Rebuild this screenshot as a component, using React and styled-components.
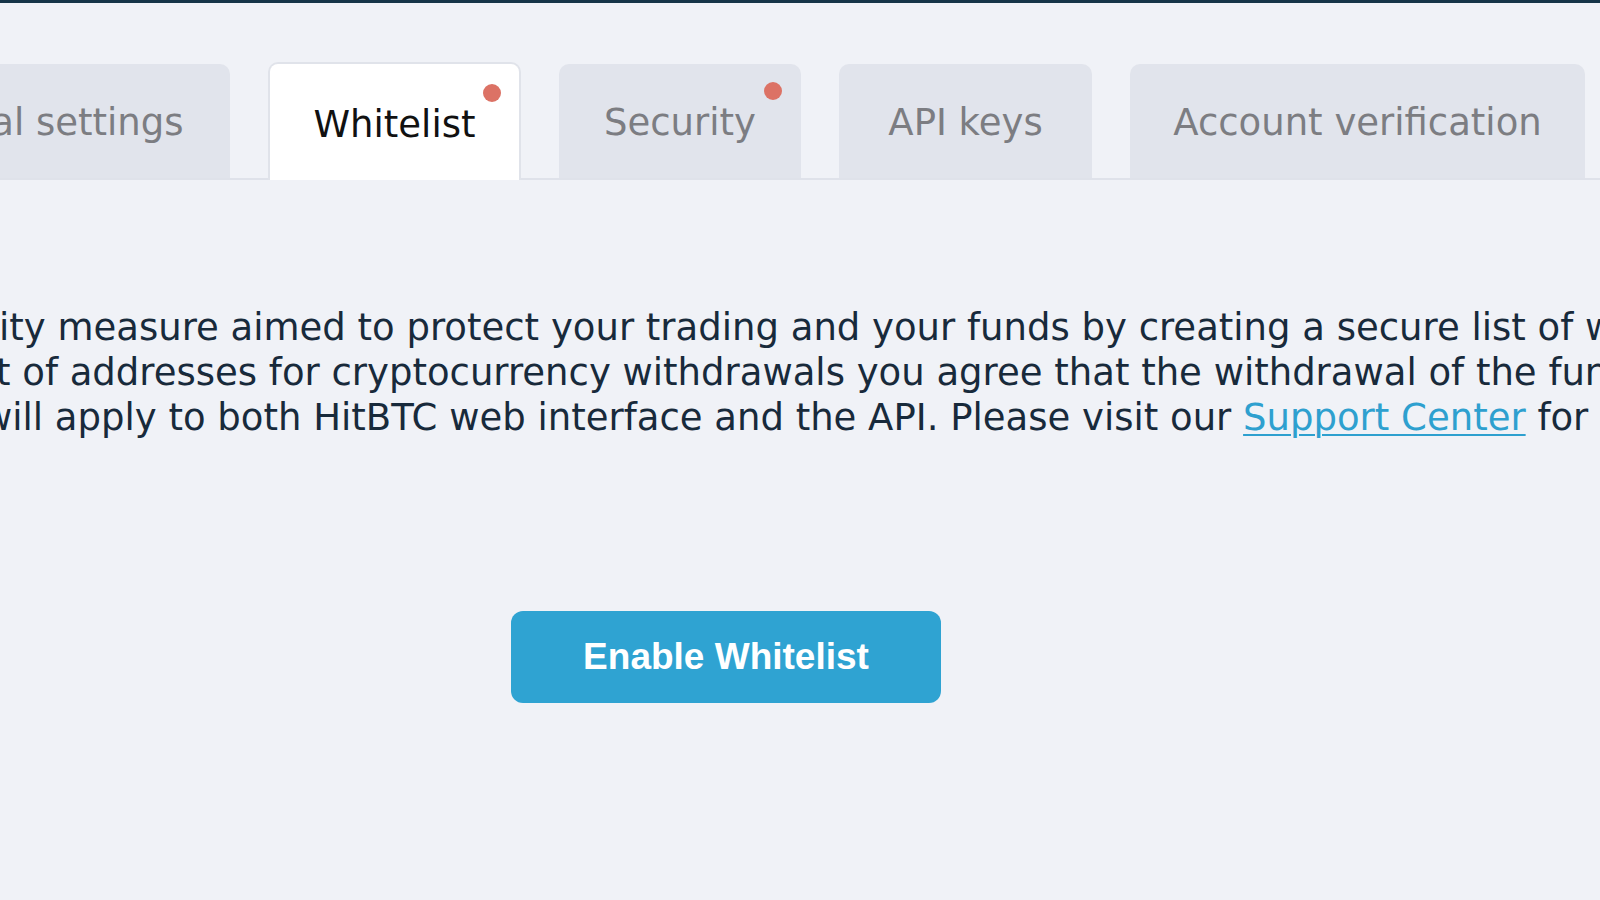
import React from "react";
import styled, { createGlobalStyle } from "styled-components";

const GlobalStyle = createGlobalStyle`
  html, body {
    margin: 0;
    padding: 0;
    background: #f0f2f7;
    overflow: hidden;
  }
  body {
    font-family: "DejaVu Sans", Verdana, sans-serif;
  }
`;

const tabs = [
  { label: "General settings", width: 398 },
  { label: "Whitelist", width: 253, active: true, dot: true },
  { label: "Security", width: 242, dot: true },
  { label: "API keys", width: 253 },
  { label: "Account verification", width: 455 },
];

const lines = [
  { offset: -1, text: "ity measure aimed to protect your trading and your funds by creating a secure list of withdrawal addresses." },
  { offset: -4, text: "t of addresses for cryptocurrency withdrawals you agree that the withdrawal of the funds will be possible only to the whitelisted addresses." },
];

const App = () => {
  return (
    <Page>
      <GlobalStyle />
      <TopBar />
      <TabBar>
        {tabs.map((tab) => (
          <Tab key={tab.label} $width={tab.width} $active={tab.active}>
            <TabLabel>
              {tab.label}
              {tab.dot && <Dot />}
            </TabLabel>
          </Tab>
        ))}
      </TabBar>
      <Description>
        {lines.map((line, index) => (
          <Line key={`line - ${index}`} $offset={line.offset}>
            {line.text}
          </Line>
        ))}
        <Line $offset={-18}>
          will apply to both HitBTC web interface and the API. Please visit our{" "}
          <SupportLink href="#">Support Center</SupportLink> for more information.
        </Line>
      </Description>
      <EnableButton type="button">Enable Whitelist</EnableButton>
    </Page>
  );
};

export default App;

const Page = styled.div`
  width: 1600px;
  height: 900px;
  overflow: hidden;
  background: #f0f2f7;
`;

const TopBar = styled.div`
  height: 3px;
  background: #163548;
`;

const TabBar = styled.div`
  display: flex;
  align-items: flex-end;
  gap: 38px;
  margin: 59px 0 0 -168px;
  border-bottom: 2px solid #dfe2ea;
`;

const Tab = styled.div`
  position: relative;
  box-sizing: border-box;
  flex: none;
  width: ${(p) => p.$width}px;
  height: ${(p) => (p.$active ? 118 : 114)}px;
  margin-bottom: ${(p) => (p.$active ? -2 : 0)}px;
  padding-top: ${(p) => (p.$active ? 4 : 2)}px;
  display: flex;
  align-items: center;
  justify-content: center;
  border-radius: 10px 10px 0 0;
  background: ${(p) => (p.$active ? "#ffffff" : "#e1e4ec")};
  border: ${(p) => (p.$active ? "2px solid #e0e3ea" : "none")};
  border-bottom: none;
  color: ${(p) => (p.$active ? "#111111" : "#7c7d82")};
  font-size: 37px;
  white-space: nowrap;
`;

const TabLabel = styled.span`
  position: relative;
  line-height: 37px;
`;

const Dot = styled.span`
  position: absolute;
  top: -22px;
  right: -26px;
  width: 18px;
  height: 18px;
  border-radius: 50%;
  background: #dc7265;
`;

const Description = styled.div`
  margin-top: 125px;
  font-size: 37px;
  line-height: 45px;
  color: #182a3b;
`;

const Line = styled.div`
  margin-left: ${(p) => p.$offset}px;
  white-space: nowrap;
`;

const SupportLink = styled.a`
  color: #2ea0cf;
  text-decoration: underline;
  text-decoration-thickness: 2px;
  text-underline-offset: 4px;
`;

const EnableButton = styled.button`
  display: block;
  width: 430px;
  height: 92px;
  margin: 171px 0 0 511px;
  padding: 0;
  border: none;
  border-radius: 12px;
  background: #2fa3d2;
  color: #ffffff;
  font-family: "Liberation Sans", Arial, sans-serif;
  font-weight: bold;
  font-size: 37px;
  cursor: pointer;
`;
